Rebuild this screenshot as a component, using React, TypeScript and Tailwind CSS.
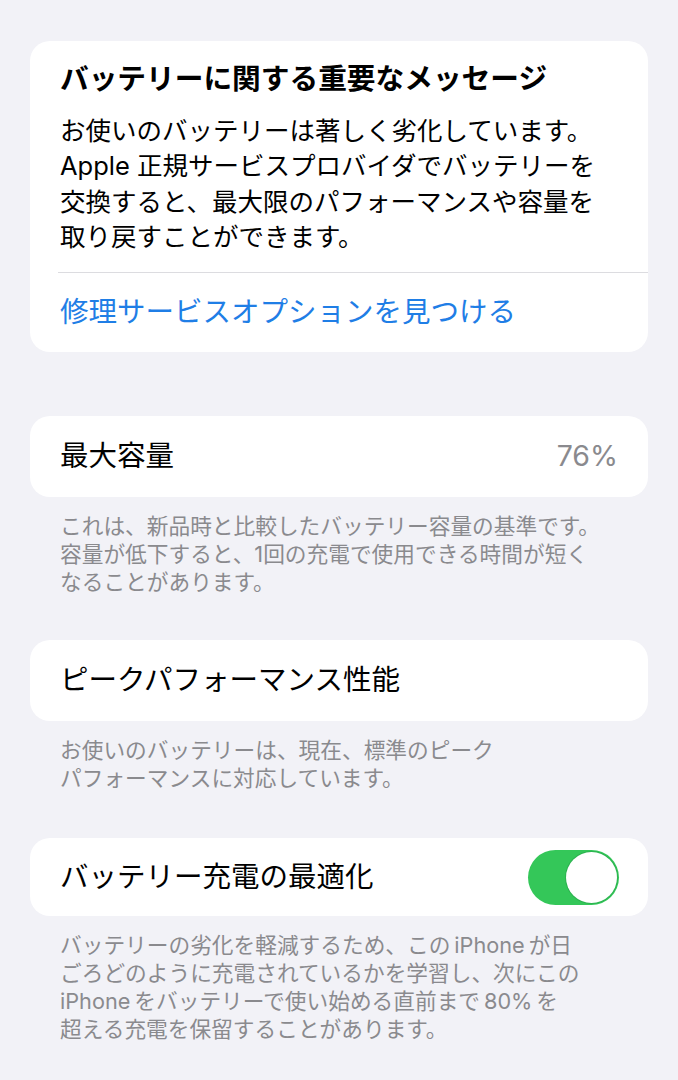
const font = { fontFamily: 'Inter, "Noto Sans CJK JP", sans-serif' };

function Footer({ lines }: { lines: string[] }) {
  return (
    <div className="mt-[15px] px-[30px] text-[21.7px] leading-[28px] text-[#8a8a8e]">
      {lines.map((l) => (
        <div key={l} className="whitespace-nowrap">
          {l}
        </div>
      ))}
    </div>
  );
}

function Toggle() {
  return (
    <div className="flex h-[55px] w-[91px] items-center justify-end rounded-full bg-[#34c759] p-[2px]">
      <div className="h-[51px] w-[51px] rounded-full bg-white shadow-[0_0_0_1px_rgba(30,140,60,0.35)]" />
    </div>
  );
}

export default function App() {
  return (
    <div className="min-h-[1080px] w-[678px] bg-[#f2f2f7] px-[30px] pt-[41px] text-black" style={font}>
      <section className="rounded-[20px] bg-white">
        <div className="px-[30px] pt-[20px] pb-[18px]">
          <h1 className="whitespace-nowrap text-[28.7px] font-bold leading-[36px]">バッテリーに関する重要なメッセージ</h1>
          <div className="mt-[16px] text-[25.5px] leading-[35.3px]">
            <div className="whitespace-nowrap">お使いのバッテリーは著しく劣化しています。</div>
            <div className="whitespace-nowrap">Apple 正規サービスプロバイダでバッテリーを</div>
            <div className="whitespace-nowrap">交換すると、最大限のパフォーマンスや容量を</div>
            <div className="whitespace-nowrap">取り戻すことができます。</div>
          </div>
        </div>
        <div className="ml-[28px] h-px bg-[#dcdce0]" />
        <div className="flex h-[79px] items-center px-[30px] text-[28.5px] text-[#1f7ee6]">
          修理サービスオプションを見つける
        </div>
      </section>

      <section className="mt-[64px] flex h-[81px] items-center justify-between rounded-[20px] bg-white pl-[30px] pr-[30px] text-[28.5px]">
        <span>最大容量</span>
        <span className="text-[#8a8a8e]">76%</span>
      </section>
      <Footer
        lines={[
          'これは、新品時と比較したバッテリー容量の基準です。',
          '容量が低下すると、1回の充電で使用できる時間が短く',
          'なることがあります。',
        ]}
      />

      <section className="mt-[44px] flex h-[81px] items-center rounded-[20px] bg-white px-[30px] text-[28.5px]">
        ピークパフォーマンス性能
      </section>
      <Footer lines={['お使いのバッテリーは、現在、標準のピーク', 'パフォーマンスに対応しています。']} />

      <section className="mt-[46px] flex h-[78px] items-center justify-between rounded-[20px] bg-white pl-[30px] pr-[29px] text-[28.5px]">
        <span>バッテリー充電の最適化</span>
        <Toggle />
      </section>
      <Footer
        lines={[
          'バッテリーの劣化を軽減するため、この\u2009iPhone\u2009が日',
          'ごろどのように充電されているかを学習し、次にこの',
          'iPhone\u2009をバッテリーで使い始める直前まで\u200980%\u2009を',
          '超える充電を保留することがあります。',
        ]}
      />
    </div>
  );
}
